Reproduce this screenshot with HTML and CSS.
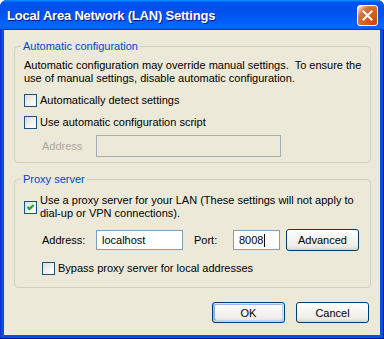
FILE: index.html
```html
<!DOCTYPE html>
<html>
<head>
<meta charset="utf-8">
<title>Local Area Network (LAN) Settings</title>
<link rel="stylesheet" href="styles.css">
</head>
<body>
<div class="window">
  <div class="titlebar">
    <span class="caption">Local Area Network (LAN) Settings</span>
    <span class="close">
      <svg width="11" height="11" viewBox="0 0 11 11"><path d="M1.5 1.5 L9.5 9.5 M9.5 1.5 L1.5 9.5" stroke="#fff" stroke-width="2" stroke-linecap="square"/></svg>
    </span>
  </div>
  <div class="client">
    <!-- automatic configuration -->
    <fieldset class="group group-auto">
      <legend>Automatic configuration</legend>
      <p class="note">Automatic configuration may override manual settings.&nbsp; To ensure the<br>use of manual settings, disable automatic configuration.</p>
      <label class="check"><span class="box"></span>Automatically detect settings</label>
      <label class="check"><span class="box"></span>Use automatic configuration script</label>
      <div class="field-row">
        <span class="lbl lbl-off">Address</span>
        <span class="edit edit-off"></span>
      </div>
    </fieldset>
    <!-- proxy server -->
    <fieldset class="group group-proxy">
      <legend>Proxy server</legend>
      <label class="check check-wrap">
        <span class="box">
          <svg width="11" height="11" viewBox="0 0 11 11"><path d="M2.5 5 L4.5 7 L8.5 3" fill="none" stroke="#21a121" stroke-width="2.2"/></svg>
        </span>
        <span>Use a proxy server for your LAN (These settings will not apply to<br>dial-up or VPN connections).</span>
      </label>
      <div class="field-row">
        <span class="lbl">Address:</span>
        <span class="edit edit-host">localhost</span>
        <span class="lbl lbl-port">Port:</span>
        <span class="edit edit-port">8008<i class="caret"></i></span>
        <button class="btn btn-adv">Advanced</button>
      </div>
      <label class="check check-indent"><span class="box"></span>Bypass proxy server for local addresses</label>
    </fieldset>
    <div class="actions">
      <button class="btn btn-default">OK</button>
      <button class="btn">Cancel</button>
    </div>
  </div>
</div>
</body>
</html>
```
FILE: styles.css
```css
html, body{
	margin: 0;
	padding: 0;
	background: #ffffff;
}
.window{
	width: 384px;
	height: 339px;
	display: flex;
	flex-direction: column;
	background: #0a4fdc;
	border-radius: 7px 7px 0 0;
	box-sizing: border-box;
	box-shadow: inset -1px -1px #00138c, inset 1px 1px #0831d9;
	font-family: "Liberation Sans", Arial, sans-serif;
	font-size: 11px;
	color: #000;
}
/* title bar */
.titlebar{
	height: 30px;
	display: flex;
	align-items: center;
	justify-content: space-between;
	padding: 0 7px 0 7px;
	border-radius: 7px 7px 0 0;
	background: linear-gradient(to bottom, #0997ff 0, #0053ee 8%, #0050ee 40%, #0066ff 88%, #0066ff 93%, #005bff 95%, #003dd7 96%, #003dd7 100%);
	box-sizing: border-box;
	flex: none;
}
.caption{
	color: #fff;
	font-family: "Liberation Sans", Arial, sans-serif;
	font-weight: bold;
	font-size: 13px;
	letter-spacing: -0.2px;
	text-shadow: 1px 1px #0f1089;
	padding-top: 1px;
}
.close{
	width: 21px;
	height: 21px;
	box-sizing: border-box;
	border: 1px solid #fff;
	border-radius: 3px;
	display: flex;
	align-items: center;
	justify-content: center;
	background: radial-gradient(circle at 90% 90%, #cc4600 0%, #dc6527 55%, #cd7546 70%, #ffccb2 90%, #fff 100%);
	margin-right: -1px;
}
/* client area */
.client{
	flex: 1;
	margin: 0 4px 4px 4px;
	background: #ece9d8;
	padding: 10px 10px 0 10px;
	display: flex;
	flex-direction: column;
}
.group{
	margin: 0 -1px 0 0;
	border: 1px solid #d0d0bf;
	border-radius: 4px;
	padding: 6px 8px 5px 9px;
	min-width: 0;
}
.group legend{
	color: #0046d5;
	line-height: 13px;
	padding: 0 2px;
	margin-left: -3px;
}
.group-proxy{
	margin-top: 10px;
	padding-top: 8px;
	padding-bottom: 12px;
}
.note{
	margin: 0;
	line-height: 13px;
}
.check{
	display: flex;
	align-items: center;
	line-height: 13px;
	margin-top: 9px;
}
.group-proxy .check-wrap{
	margin-top: 0;
}
.check-indent{
	margin-left: 18px;
	margin-top: 11px;
}
.box{
	width: 13px;
	height: 13px;
	box-sizing: border-box;
	border: 1px solid #1c5180;
	background: linear-gradient(135deg, #dcdcd7 0%, #f4f4f0 60%, #fff 100%);
	margin-right: 3px;
	flex: none;
	display: flex;
	align-items: center;
	justify-content: center;
}
.field-row{
	display: flex;
	align-items: center;
	margin-top: 6px;
	padding-left: 18px;
}
.group-proxy .field-row{
	margin-top: 9px;
}
.lbl{
	width: 54px;
	flex: none;
}
.lbl-off{
	color: #aca899;
}
.lbl-port{
	width: 39px;
	margin-left: 11px;
}
.edit{
	height: 20px;
	box-sizing: border-box;
	border: 1px solid #7f9db9;
	background: #fff;
	padding: 0 0 0 5px;
	line-height: 18px;
	display: flex;
	align-items: center;
}
.edit-off{
	width: 185px;
	height: 22px;
	border-color: #a5acb2;
	background: #ece9d8;
}
.edit-host{
	width: 87px;
}
.edit-port{
	width: 47px;
}
.caret{
	display: inline-block;
	width: 1px;
	height: 13px;
	background: #000;
	margin-left: 1px;
}
/* buttons */
.btn{
	width: 73px;
	height: 21px;
	box-sizing: border-box;
	border: 1px solid #003c74;
	border-radius: 3px;
	background: linear-gradient(to bottom, #fff 0%, #f6f5f1 45%, #ecebe6 85%, #d6d0c5 100%);
	font-family: "Liberation Sans", Arial, sans-serif;
	font-size: 11px;
	color: #000;
	padding: 0;
}
.btn-adv{
	margin-left: 6px;
	height: 22px;
}
.btn-default{
	box-shadow: inset -1px 1px #cee7ff, inset 1px 2px #98b8ea, inset -2px -2px #bcd4f6, inset 1px 1px #89ade4, inset 2px -2px #89ade4;
}
.actions{
	display: flex;
	justify-content: flex-end;
	gap: 11px;
	margin-top: 14px;
	padding-right: 1px;
}
```
